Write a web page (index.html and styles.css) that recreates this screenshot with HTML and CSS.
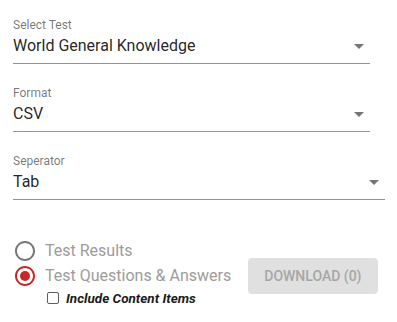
FILE: index.html
```html
<!DOCTYPE html>
<html>
<head>
<meta charset="utf-8">
<link rel="stylesheet" href="styles.css">
</head>
<body>
<div class="form">
  <div class="field">
    <div class="label">Select Test</div>
    <div class="select">
      <span class="value">World General Knowledge</span>
      <svg class="arrow" viewBox="0 0 24 24" width="24" height="24"><path d="M7 10l5 5 5-5z"/></svg>
    </div>
  </div>
  <div class="field">
    <div class="label">Format</div>
    <div class="select">
      <span class="value">CSV</span>
      <svg class="arrow" viewBox="0 0 24 24" width="24" height="24"><path d="M7 10l5 5 5-5z"/></svg>
    </div>
  </div>
  <div class="field wide">
    <div class="label">Seperator</div>
    <div class="select">
      <span class="value">Tab</span>
      <svg class="arrow" viewBox="0 0 24 24" width="24" height="24"><path d="M7 10l5 5 5-5z"/></svg>
    </div>
  </div>

  <div class="options">
    <div class="row">
      <svg class="radio off" viewBox="0 0 24 24" width="24" height="24"><path d="M12 2C6.48 2 2 6.48 2 12s4.48 10 10 10 10-4.48 10-10S17.52 2 12 2zm0 18c-4.42 0-8-3.58-8-8s3.58-8 8-8 8 3.58 8 8-3.58 8-8 8z"/></svg>
      <span class="radio-label">Test Results</span>
    </div>
    <div class="row">
      <svg class="radio on" viewBox="0 0 24 24" width="24" height="24"><path d="M12 2C6.48 2 2 6.48 2 12s4.48 10 10 10 10-4.48 10-10S17.52 2 12 2zm0 18c-4.42 0-8-3.58-8-8s3.58-8 8-8 8 3.58 8 8-3.58 8-8 8z"/><circle cx="12" cy="12" r="5"/></svg>
      <span class="radio-label">Test Questions &amp; Answers</span>
      <button class="download" disabled>Download (0)</button>
    </div>
    <div class="check-row">
      <span class="checkbox"></span>
      <span class="check-label">Include Content Items</span>
    </div>
  </div>
</div>
</body>
</html>
```

FILE: styles.css
```css
html, body {
  margin: 0;
  padding: 0;
  background: #ffffff;
}

body {
  font-family: Roboto, "Liberation Sans", sans-serif;
  color: rgba(0, 0, 0, 0.87);
}

.form {
  padding: 18px 0 0 13px;
}

.field {
  width: 357px;
  margin-bottom: 22px;
}

.field.wide {
  width: 372px;
}

.label {
  font-size: 12px;
  line-height: 14px;
  color: rgba(0, 0, 0, 0.54);
}

.select {
  display: flex;
  align-items: center;
  padding: 4px 0 8px;
  border-bottom: 1px solid rgba(0, 0, 0, 0.42);
}

.value {
  flex: 1;
  font-size: 16px;
  line-height: 19px;
  color: rgba(0, 0, 0, 0.87);
  white-space: nowrap;
}

.arrow {
  flex: none;
  display: block;
  fill: rgba(0, 0, 0, 0.54);
  margin: -2px -1px -3px 0;
}

.options {
  margin-top: 38px;
}

.row {
  display: flex;
  align-items: center;
  height: 25px;
}

.radio {
  flex: none;
  display: block;
}

.radio.off {
  fill: #777777;
}

.radio.on {
  fill: #c62828;
}

.radio-label {
  margin-left: 8px;
  font-size: 16px;
  line-height: 19px;
  color: #9c9c9c;
  white-space: nowrap;
}

.download {
  margin-left: 17px;
  padding: 8px 16px;
  border: none;
  border-radius: 4px;
  background: #e0e0e0;
  color: #a6a6a6;
  font-family: Roboto, "Liberation Sans", sans-serif;
  font-size: 14px;
  font-weight: 500;
  line-height: 20px;
  text-transform: uppercase;
}

.check-row {
  display: flex;
  align-items: center;
  height: 19px;
  padding-left: 34px;
}

.checkbox {
  box-sizing: border-box;
  width: 12px;
  height: 12px;
  border: 1px solid #5f5f5f;
  border-radius: 2px;
  background: #ffffff;
}

.check-label {
  margin-left: 7px;
  font-size: 13.5px;
  line-height: 16px;
  font-weight: 700;
  font-style: italic;
  color: #1a1a1a;
}
```
